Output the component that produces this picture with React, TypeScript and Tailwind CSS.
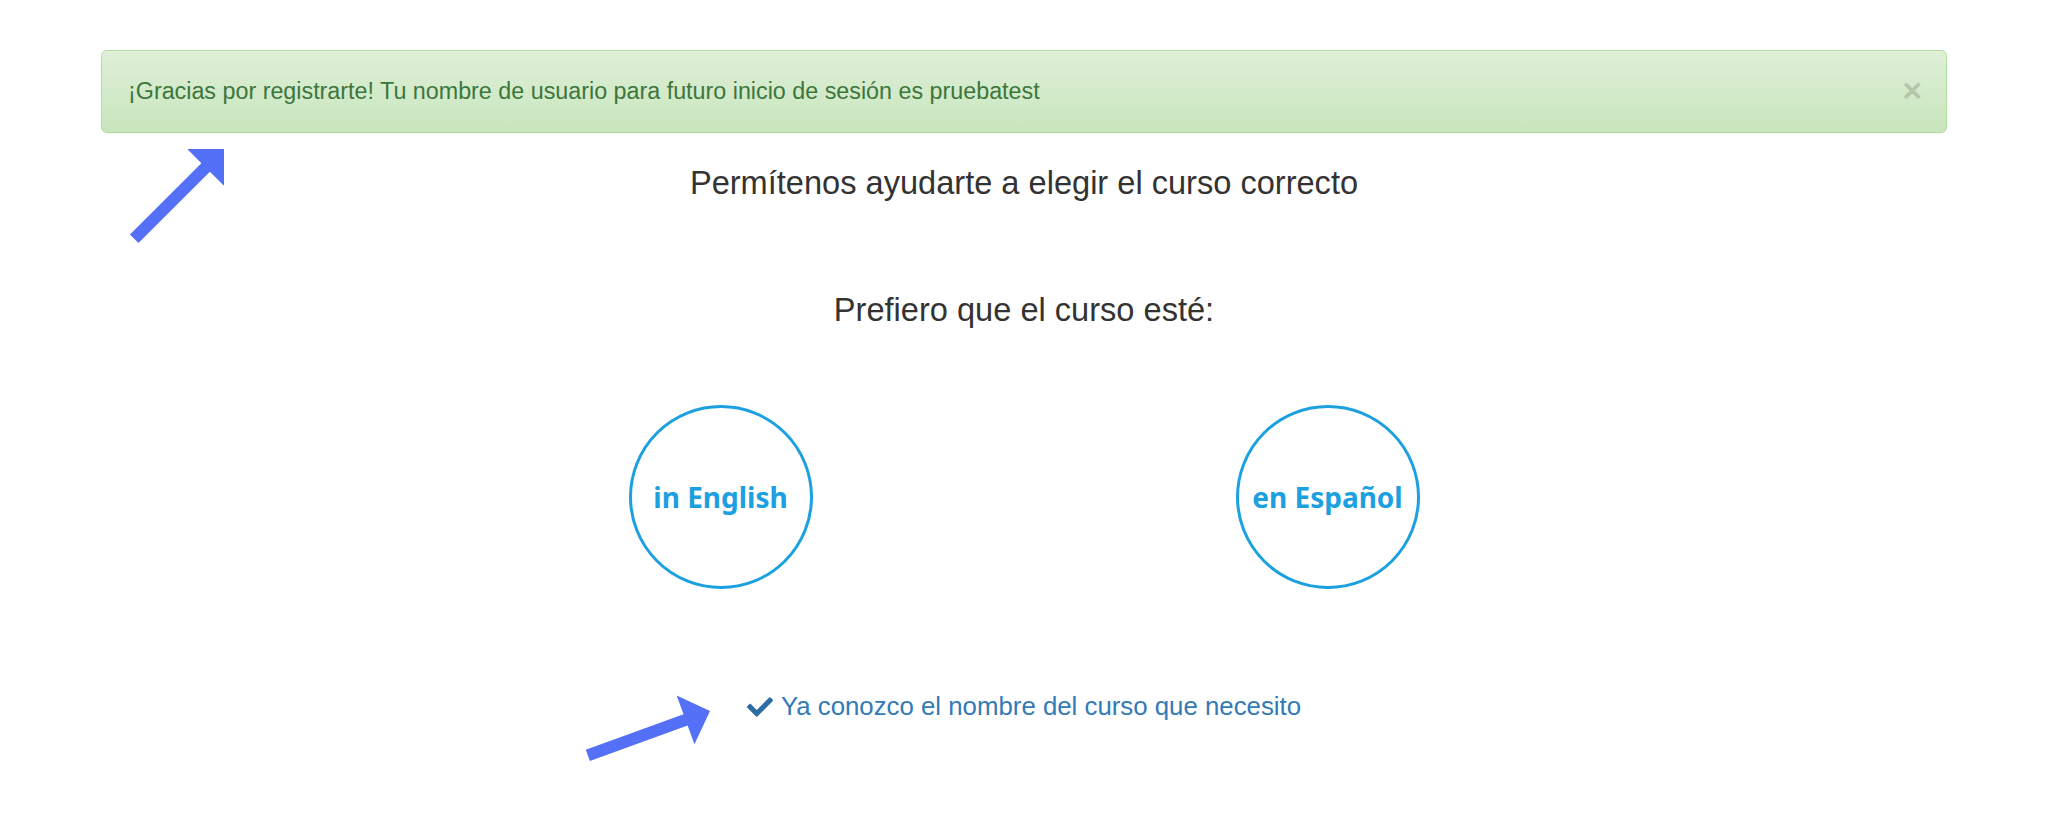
import React from 'react';

// annotation arrow: tip at (x, y), pointing along `angle` degrees
function Arrow({ x, y, angle, length }: { x: number; y: number; angle: number; length: number }) {
  const pts = [
    [0, 0],
    [-26, -26],
    [-26, -6],
    [-length, -6],
    [-length, 6],
    [-26, 6],
    [-26, 26],
  ]
    .map((p) => p.join(','))
    .join(' ');
  return <polygon points={pts} fill="#5470f7" transform={`translate(${x} ${y}) rotate(${angle})`} />;
}

function CourseCircle({ label }: { label: string }) {
  return (
    <button className="flex h-[184px] w-[184px] items-center justify-center rounded-full border-[3px] border-[#1ca0e0] bg-white">
      <span className="font-['Noto_Sans',sans-serif] text-[28px] font-bold leading-none text-[#1ca0e0]">{label}</span>
    </button>
  );
}

export default function App() {
  return (
    <div className="relative min-h-screen bg-white font-['Liberation_Sans',Arial,sans-serif] text-[#333]">
      <div className="px-[101px] pt-[50px]">
        {/* Success alert */}
        <div className="flex items-center justify-between rounded-[6px] border border-[#b2dba1] bg-linear-to-b from-[#dff0d8] to-[#c8e5bc] py-[24px] pl-[26px] pr-[24px] text-[23.3px] leading-[33px] text-[#3c763d] shadow-[inset_0_1px_0_rgba(255,255,255,0.25),0_1px_2px_rgba(0,0,0,0.05)]">
          <span>¡Gracias por registrarte! Tu nombre de usuario para futuro inicio de sesión es pruebatest</span>
          <button className="-mt-[4px] text-[34px] font-bold leading-none text-black opacity-15 [text-shadow:0_1px_0_#fff]">
            ×
          </button>
        </div>

        <h3 className="mt-[32px] text-center text-[32.6px] leading-[35px]">Permítenos ayudarte a elegir el curso correcto</h3>

        <h3 className="mt-[92px] text-center text-[32.6px] leading-[35px]">Prefiero que el curso esté:</h3>

        <div className="mt-[78px] flex justify-center gap-[423px]">
          <CourseCircle label="in English" />
          <CourseCircle label="en Español" />
        </div>

        <div className="mt-[99px] flex justify-center">
          <a href="#" className="flex items-center gap-[8px] text-[25.8px] leading-[37px] text-[#337ab7]">
            <svg viewBox="0 60 512 392" className="h-[20px] w-[26px]" fill="#2e6da4">
              <path d="M173.898 439.404l-166.4-166.4c-9.997-9.997-9.997-26.206 0-36.204l36.203-36.204c9.997-9.998 26.207-9.998 36.204 0L192 312.69 432.095 72.596c9.997-9.997 26.207-9.997 36.204 0l36.203 36.204c9.997 9.997 9.997 26.206 0 36.204l-294.4 294.401c-9.998 9.997-26.207 9.997-36.204-.001z" />
            </svg>
            Ya conozco el nombre del curso que necesito
          </a>
        </div>
      </div>

      {/* annotation arrows */}
      <svg className="pointer-events-none absolute left-0 top-0 h-full w-full">
        <Arrow x={224} y={149} angle={-45} length={127} />
        <Arrow x={710} y={711} angle={-20} length={130} />
      </svg>
    </div>
  );
}
